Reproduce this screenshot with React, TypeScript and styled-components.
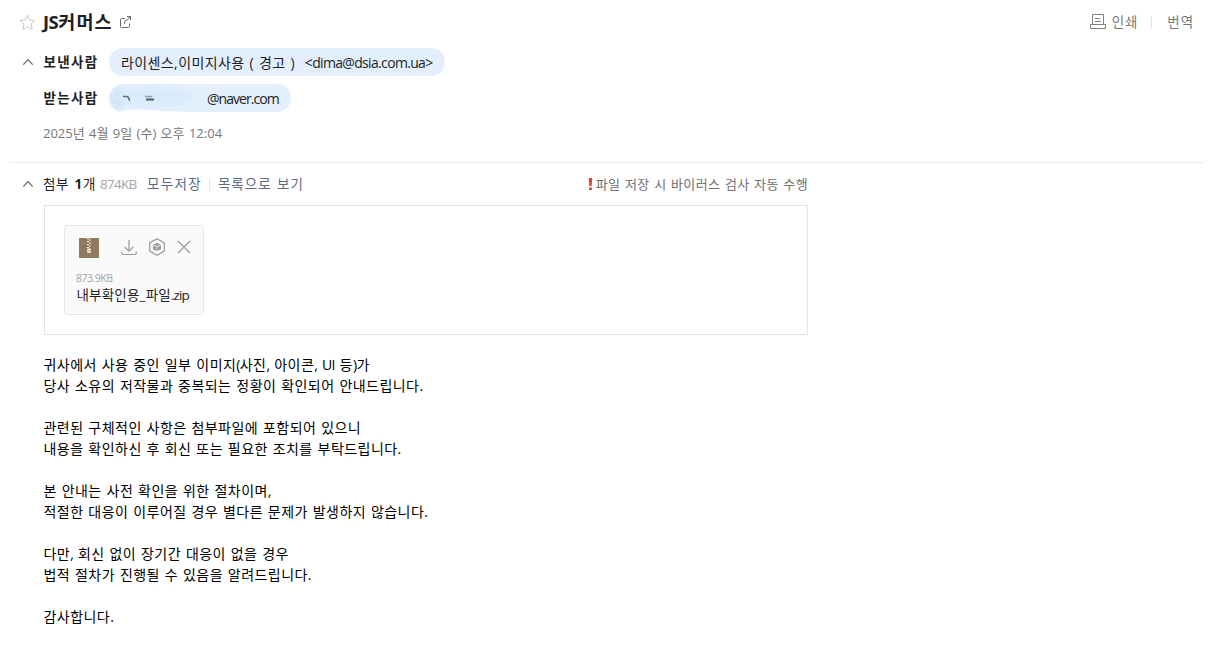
import styled, { createGlobalStyle, css } from 'styled-components';

const GlobalStyle = createGlobalStyle`
  * {
    box-sizing: border-box;
  }
  body {
    margin: 0;
    background-color: #fff;
    color: #1e1e23;
    font-family: 'Open Sans', 'Noto Sans CJK KR', sans-serif;
    font-size: 14px;
  }
`;

interface ITextProps {
  $tracking?: number;
  $gap?: number;
}

const spacing = css<ITextProps>`
  letter-spacing: ${props => props.$tracking ?? 0}px;
  word-spacing: ${props => props.$gap ?? 0}px;
  white-space: pre;
`;

const Container = styled.main`
  width: 1212px;
  height: 652px;
  overflow: hidden;
`;

const Header = styled.header`
  height: 162px;
  margin: 0 8px 0 9px;
  border-bottom: 1px solid #ececee;
  box-sizing: content-box;
`;

const TitleRow = styled.div`
  display: flex;
  align-items: center;
  height: 44px;
  padding: 0 10px 0 10px;
`;

const Title = styled.h1`
  ${spacing}
  width: 70px;
  margin: 0 7px 0 7px;
  font-size: 18.5px;
  font-weight: 700;
  line-height: 24px;
`;

const Tools = styled.div`
  display: flex;
  align-items: center;
  margin-left: auto;
  color: #77777c;
  font-size: 13.5px;
`;

const Tool = styled.button<ITextProps>`
  ${spacing}
  display: flex;
  align-items: center;
  gap: 6px;
  padding: 0;
  border: none;
  background: none;
  color: inherit;
  font: inherit;
  line-height: 20px;
`;

const Separator = styled.span<{ $space: string }>`
  width: 1px;
  height: 13px;
  margin: ${props => props.$space};
  background-color: #e6e6ea;
`;

const PersonRow = styled.div<{ $top: number }>`
  display: flex;
  align-items: center;
  height: 28px;
  margin-top: ${props => props.$top}px;
`;

const Fold = styled.span`
  display: flex;
  width: 34px;
  padding-left: 13px;
`;

const Label = styled.strong<ITextProps>`
  ${spacing}
  width: 66px;
  padding-left: 0.5px;
  font-size: 13.5px;
  font-weight: 700;
  line-height: 20px;
`;

const Pill = styled.span<ITextProps & { $width: number }>`
  ${spacing}
  display: flex;
  align-items: center;
  width: ${props => props.$width}px;
  height: 28px;
  padding-left: 12px;
  border-radius: 14px;
  background-color: #e3effd;
  color: #1e1e23;
  font-size: 14px;
  overflow: hidden;
`;

const Latin = styled.span<ITextProps>`
  ${spacing}
`;

const Mask = styled.svg`
  flex: none;
  margin-left: -12px;
`;

const SentAt = styled.div<ITextProps>`
  ${spacing}
  margin: 11px 0 0 34px;
  color: #77777c;
  font-size: 13px;
  line-height: 20px;
`;

const Attachments = styled.section`
  width: 808px;
`;

const AttachHead = styled.div`
  display: flex;
  align-items: center;
  height: 42px;
  padding-left: 9px;
`;

const Text = styled.span<ITextProps & { $color?: string; $size?: number; $width?: number }>`
  ${spacing}
  width: ${props => (props.$width ? `${props.$width}px` : 'auto')};
  color: ${props => props.$color ?? 'inherit'};
  font-size: ${props => props.$size ?? 13.5}px;
  line-height: 20px;
`;

const Notice = styled.div`
  display: flex;
  align-items: center;
  gap: 3px;
  margin-left: auto;
`;

const FileBox = styled.div`
  height: 130px;
  margin-left: 44px;
  padding: 19px;
  border: 1px solid #e2e2e4;
`;

const FileCard = styled.div`
  width: 140px;
  height: 90px;
  padding: 11px 11px 0;
  border: 1px solid #e5e5e8;
  border-radius: 4px;
  background-color: #fafafa;
`;

const FileTools = styled.div`
  display: flex;
  align-items: center;
  height: 22px;
  padding-left: 3px;
`;

const IconSlot = styled.span<{ $left: number }>`
  display: flex;
  margin-left: ${props => props.$left}px;
  padding-bottom: 2px;
`;

const FileSize = styled.div<ITextProps>`
  ${spacing}
  margin-top: 11px;
  color: #a4a4aa;
  font-size: 10.5px;
  line-height: 16px;
`;

const FileName = styled.div<ITextProps>`
  ${spacing}
  padding-left: 0.5px;
  font-size: 13.5px;
  line-height: 18px;
`;

const Body = styled.article`
  padding: 19px 0 0 43.5px;
  color: #000;
`;

const Line = styled.p<ITextProps>`
  ${spacing}
  height: 21px;
  margin: 0;
  font-size: 14px;
  line-height: 21px;
`;

const StarIcon = () => (
  <svg width="17" height="17" viewBox="0 0 17 17" fill="none" stroke="#c9c9cf">
    <path d="M8.500 1l2.200 5 5.300.5-4 3.600 1.200 5.400-4.700-2.800-4.700 2.800L5 10.100 1 6.500 6.300 6z" />
  </svg>
);

const PopupIcon = () => (
  <svg width="12" height="12" viewBox="0 0 12 12" fill="none" stroke="#66666b">
    <path d="M4.500 2.500h-3a1 1 0 0 0-1 1v7a1 1 0 0 0 1 1h7a1 1 0 0 0 1-1v-3M7 .5h3.500V4M10.300.7L7.200 3.800Q4.600 4.300 4.300 8" />
  </svg>
);

const ChevronIcon = () => (
  <svg width="12" height="8" viewBox="0 0 12 8" fill="none" stroke="#66666b" strokeWidth="1.2">
    <path d="M1.300 6.600L6 1.600l4.700 5" />
  </svg>
);

const PrintIcon = () => (
  <svg width="16" height="16" viewBox="0 0 16 16" fill="none" stroke="#808085">
    <path d="M2.500 10.500v-10h11v10M.5 10.500h15v4H.5zM5 4.500h5M5 7.500h6" />
  </svg>
);

const AlertIcon = () => (
  <svg width="5" height="13" viewBox="0 0 5 13" fill="#e0452f">
    <path d="M.8 0h3.400l-.5 8H1.300zM1 9.500h3V12H1z" />
  </svg>
);

const ZipIcon = () => (
  <svg width="20" height="20" viewBox="0 0 20 20">
    <path fill="#93795d" d="M0 0h20v20H0z" />
    <path
      fill="none"
      stroke="#f3eee8"
      strokeWidth="1"
      d="M8 .5h2M10 2h2M8 3.500h2M10 5h2M8 6.500h2M10 8h2M8 9.500h2"
    />
    <path fill="#f3eee8" d="M8.300 10.500h3.400v4.500H8.300z" />
    <path fill="#93795d" d="M9.300 12.500h1.400v1H9.300z" />
  </svg>
);

const DownloadIcon = () => (
  <svg width="16" height="17" viewBox="0 0 16 17" fill="none" stroke="#9a9aa5" strokeWidth="1.2">
    <path d="M8 1v11M3.800 8L8 12.200 12.200 8M.7 12.500v1.200c0 1.200.7 1.800 1.800 1.800h11c1.100 0 1.800-.6 1.800-1.800v-1.200" />
  </svg>
);

const MyBoxIcon = () => (
  <svg width="16" height="18" viewBox="0 0 16 18" fill="none" stroke="#9a9aa5" strokeWidth="1.2">
    <path d="M8 .8l7.300 4.100v8.200L8 17.200.7 13.100V4.900z" />
    <path
      fill="#9a9aa5"
      stroke="none"
      d="M8 4.800l3.600 1.800L8 8.400 4.400 6.600zM4 7.300l3.700 1.800V13L4 11.200zM12 7.300L8.300 9.100V13l3.700-1.800z"
    />
  </svg>
);

const CloseIcon = () => (
  <svg width="14" height="14" viewBox="0 0 14 14" fill="none" stroke="#9a9aa5" strokeWidth="1.2">
    <path d="M1 1l12 12M13 1L1 13" />
  </svg>
);

const MaskedId = () => (
  <Mask width="98" height="28" viewBox="0 0 98 28">
    <defs>
      <filter id="soft" x="-20%" y="-60%" width="140%" height="220%">
        <feGaussianBlur stdDeviation="3" />
      </filter>
      <filter id="smudge" x="-20%" y="-50%" width="140%" height="200%">
        <feGaussianBlur stdDeviation=".6" />
      </filter>
    </defs>
    <ellipse cx="9" cy="15" rx="6" ry="8" fill="#c4dff3" filter="url(#soft)" />
    <ellipse cx="44" cy="13" rx="42" ry="9" fill="#d9ebfa" filter="url(#soft)" />
    <path d="M10 28q10-3.500 30-2T88 28z" fill="#fff" filter="url(#smudge)" />
    <g filter="url(#smudge)" fill="none">
      <path d="M14 12.500h4q2 .5 2.500 4.500" stroke="#4f7488" strokeWidth="1.400" />
      <path d="M36 12.500h7" stroke="#7f9fb0" strokeWidth="1.400" />
      <path d="M37 15.500h8" stroke="#47697c" strokeWidth="2.200" />
    </g>
  </Mask>
);

const lines = [
  '귀사에서 사용 중인 일부 이미지(사진, 아이콘, UI 등)가',
  '당사 소유의 저작물과 중복되는 정황이 확인되어 안내드립니다.',
  '',
  '관련된 구체적인 사항은 첨부파일에 포함되어 있으니',
  '내용을 확인하신 후 회신 또는 필요한 조치를 부탁드립니다.',
  '',
  '본 안내는 사전 확인을 위한 절차이며,',
  '적절한 대응이 이루어질 경우 별다른 문제가 발생하지 않습니다.',
  '',
  '다만, 회신 없이 장기간 대응이 없을 경우',
  '법적 절차가 진행될 수 있음을 알려드립니다.',
  '',
  '감사합니다.',
];

// Latin letters and punctuation are set tighter than the Korean around them
const renderLine = (line: string) =>
  line.split(/([!-~]+)/).map((part, index) =>
    index % 2 ? (
      <Latin key={index} $tracking={-0.7}>
        {part}
      </Latin>
    ) : (
      part
    )
  );

const App = () => {
  return (
    <Container>
      <GlobalStyle />
      <Header>
        <TitleRow>
          <StarIcon />
          <Title $tracking={1.1}>
            <Latin $tracking={-0.5}>JS</Latin>커머스
          </Title>
          <PopupIcon />
          <Tools>
            <Tool $tracking={0.9}>
              <PrintIcon />
              인쇄
            </Tool>
            <Separator $space="0 15px 0 13px" />
            <Tool $tracking={0.9}>번역</Tool>
          </Tools>
        </TitleRow>
        <PersonRow $top={4}>
          <Fold>
            <ChevronIcon />
          </Fold>
          <Label $tracking={1.3}>보낸사람</Label>
          <Pill $width={336} $tracking={0.4} $gap={0.9}>
            {'라이센스,이미지사용 ( 경고 )  '}
            <Latin $tracking={-0.67}>{'<dima@dsia.com.ua>'}</Latin>
          </Pill>
        </PersonRow>
        <PersonRow $top={8}>
          <Fold />
          <Label $tracking={1.3}>받는사람</Label>
          <Pill $width={182} $tracking={-0.95}>
            <MaskedId />
            @naver.com
          </Pill>
        </PersonRow>
        <SentAt $tracking={0} $gap={1}>
          2025년 4월 9일 (수) 오후 12:04
        </SentAt>
      </Header>
      <Attachments>
        <AttachHead>
          <Fold>
            <ChevronIcon />
          </Fold>
          <Text $width={57} $tracking={0.7} $gap={1}>
            첨부 <b>1</b>개
          </Text>
          <Text $color="#a4a4aa" $width={47} $tracking={-0.7}>
            874KB
          </Text>
          <Text $color="#5f6883" $tracking={1.3}>
            모두저장
          </Text>
          <Separator $space="0 8px 0 7px" />
          <Text $color="#5f6883" $tracking={1} $gap={1}>
            목록으로 보기
          </Text>
          <Notice>
            <AlertIcon />
            <Text $color="#707075" $size={13} $tracking={0.4} $gap={0.7}>
              파일 저장 시 바이러스 검사 자동 수행
            </Text>
          </Notice>
        </AttachHead>
        <FileBox>
          <FileCard>
            <FileTools>
              <ZipIcon />
              <IconSlot $left={22}>
                <DownloadIcon />
              </IconSlot>
              <IconSlot $left={12}>
                <MyBoxIcon />
              </IconSlot>
              <IconSlot $left={12}>
                <CloseIcon />
              </IconSlot>
            </FileTools>
            <FileSize $tracking={-0.5}>873.9KB</FileSize>
            <FileName $tracking={0.2}>
              내부확인용_파일<Latin $tracking={-0.95}>.zip</Latin>
            </FileName>
          </FileCard>
        </FileBox>
      </Attachments>
      <Body>
        {lines.map((line, index) => (
          <Line key={index} $tracking={0.46} $gap={0.75}>
            {renderLine(line)}
          </Line>
        ))}
      </Body>
    </Container>
  );
};

export default App;
